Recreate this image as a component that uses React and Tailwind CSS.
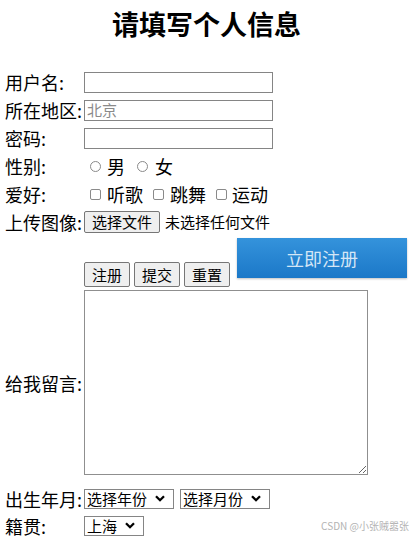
import React from "react";

const Chevron = () => (
  <svg width="10" height="7" viewBox="0 0 10 7" className="shrink-0">
    <path d="M1 1.2 5 5.2 9 1.2" fill="none" stroke="#000" strokeWidth="2.3" />
  </svg>
);

function Row({ label, children, className = "h-[28px]" }) {
  return (
    <div className={`flex items-center ${className}`}>
      <span className="w-[79px] shrink-0 leading-[24px]">{label}</span>
      <div className="flex items-center">{children}</div>
    </div>
  );
}

function Select({ text, width }) {
  return (
    <div className={`flex items-center justify-between h-[20px] border border-[#858585] pl-[2px] pr-[8px] ${width}`}>
      <select className="appearance-none bg-transparent text-[15px] leading-[18px] outline-none min-w-0 flex-1">
        <option>{text}</option>
      </select>
      <Chevron />
    </div>
  );
}

const btn = "h-[25px] w-[46px] border border-[#767676] rounded-[2px] bg-[#efefef] text-[15px] leading-[23px] text-black";

export default function App() {
  return (
    <div className="w-[413px] h-[539px] bg-white text-black text-[18px] font-['Microsoft_YaHei','Noto_Sans_CJK_SC',sans-serif] pl-[5px] overflow-hidden">
      <h1 className="h-[68px] pt-[8px] pr-[5px] text-center text-[27px] font-bold leading-[32px]">请填写个人信息</h1>

      <Row label="用户名:">
        <input type="text" className="w-[189px] h-[21px] border border-[#858585] px-[2px] text-[15px] outline-none" />
      </Row>
      <Row label="所在地区:">
        <input
          type="text"
          placeholder="北京"
          className="w-[189px] h-[21px] border border-[#858585] px-[2px] text-[15px] outline-none placeholder:text-[#8a8a8a]"
        />
      </Row>
      <Row label="密码:">
        <input type="password" className="w-[189px] h-[21px] border border-[#858585] px-[2px] text-[15px] outline-none" />
      </Row>
      <Row label="性别:">
        <input type="radio" name="sex" className="appearance-none ml-[6px] w-[11px] h-[11px] rounded-full border border-[#8a8a8a]" />
        <span className="ml-[6px]">男</span>
        <input type="radio" name="sex" className="appearance-none ml-[12px] w-[11px] h-[11px] rounded-full border border-[#8a8a8a]" />
        <span className="ml-[7px]">女</span>
      </Row>
      <Row label="爱好:">
        <input type="checkbox" className="appearance-none ml-[6px] w-[11px] h-[11px] rounded-[2px] border border-[#8a8a8a]" />
        <span className="ml-[6px]">听歌</span>
        <input type="checkbox" className="appearance-none ml-[10px] w-[11px] h-[11px] rounded-[2px] border border-[#8a8a8a]" />
        <span className="ml-[6px]">跳舞</span>
        <input type="checkbox" className="appearance-none ml-[10px] w-[11px] h-[11px] rounded-[2px] border border-[#8a8a8a]" />
        <span className="ml-[5px]">运动</span>
      </Row>
      <Row label="上传图像:">
        <button className="h-[22px] px-[7px] border border-[#767676] rounded-[2px] bg-[#efefef] text-[15px] leading-[20px]">选择文件</button>
        <span className="ml-[5px] text-[15px]">未选择任何文件</span>
      </Row>

      <div className="flex items-start h-[51px] pl-[79px]">
        <div className="flex gap-[4px] mt-[26px]">
          <button className={btn}>注册</button>
          <button className={btn}>提交</button>
          <button className={btn}>重置</button>
        </div>
        <button className="ml-[7px] mt-[2px] w-[170px] h-[40px] bg-linear-to-b from-[#3493dc] to-[#1b78c8] shadow-[0_1px_2px_rgba(0,0,0,0.25)] text-[18px] text-[#d4e6f6]">
          立即注册
        </button>
      </div>

      <Row label="给我留言:" className="mt-[3px]">
        <textarea className="w-[284px] h-[185px] border border-[#8f8f8f] resize outline-none" />
      </Row>

      <Row label="出生年月:" className="mt-[10px] h-[27px]">
        <Select text="选择年份" width="w-[90px]" />
        <div className="ml-[6px]">
          <Select text="选择月份" width="w-[90px]" />
        </div>
      </Row>
      <div className="flex items-center h-[27px] pr-[4px]">
        <span className="w-[79px] shrink-0 leading-[24px]">籍贯:</span>
        <Select text="上海" width="w-[60px]" />
        <span className="ml-auto text-[10px] text-[#b3b3b3] font-['Noto_Sans_CJK_SC',sans-serif]">CSDN @小张贼嚣张</span>
      </div>
    </div>
  );
}
